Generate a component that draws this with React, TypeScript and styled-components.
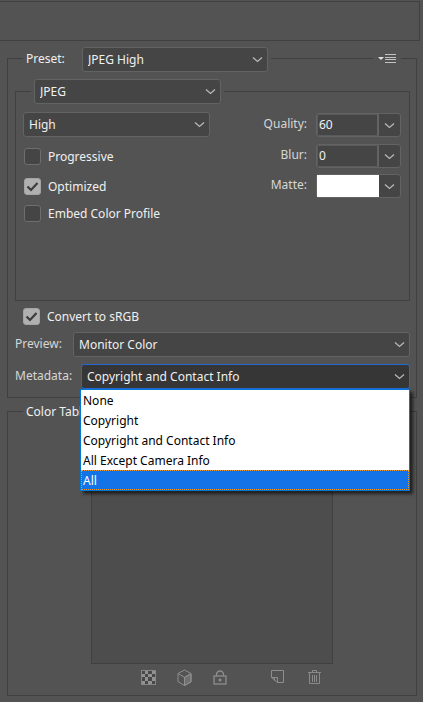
import React, { useState } from "react";
import styled, { createGlobalStyle, css } from "styled-components";

const color = {
  page: "#535353",
  line: "#404040",
  field: "#454545",
  fieldEdge: "#636363",
  text: "#f0f0f0",
  label: "#d6d6d6",
  icon: "#b8b8b8",
  dim: "#858585",
  accent: "#2467d1",
  listEdge: "#0078d7",
  listActive: "#1473e6",
};

const GlobalStyle = createGlobalStyle`
  *, *::before, *::after { box-sizing: border-box; }
  body {
    margin: 0;
    background: ${color.page};
    color: ${color.text};
    font: 12px/16px "Noto Sans", sans-serif;
  }
  button, input, select { font: inherit; color: inherit; margin: 0; }
`;

const Page = styled.main`
  padding: 1px 0 6px;
`;

const PreviewFrame = styled.div`
  height: 40px;
  margin-right: 3px;
  border: 1px solid ${color.line};
  border-left: 0;
`;

const Panel = styled.section<{ $space: number }>`
  margin: ${(p) => p.$space}px 6px 0 7px;
  border: 1px solid ${color.line};
`;

const SettingsPanel = styled(Panel)`
  padding: 0 6px 8px 7px;
`;

const FormatBox = styled.div`
  margin-top: 19px;
  border: 1px solid ${color.line};
`;

const PanelHeader = styled.div`
  display: flex;
  align-items: center;
  justify-content: space-between;
  height: 25px;
  margin: -12px 8px 0;
`;

const FormatHeader = styled(PanelHeader)`
  margin: -13px 15px 0;
`;

const Legend = styled.div`
  display: flex;
  align-items: center;
  padding: 0 3px;
  background: ${color.page};
`;

const LegendLabel = styled.label`
  width: 56px;
  height: 18px;
`;

const MenuButton = styled.button`
  display: flex;
  padding: 3px 5px 5px;
  margin-right: 1px;
  border: 0;
  background: ${color.page};
`;

const fieldShape = css`
  height: 25px;
  border: 1px solid ${color.fieldEdge};
  border-radius: 3px;
  background: ${color.field};
`;

const SelectWrap = styled.div<{ $width?: number }>`
  display: grid;
  align-items: center;
  ${(p) => (p.$width ? `width: ${p.$width}px;` : "flex: 1;")}
  > * { grid-area: 1 / 1; }
  > svg { justify-self: end; margin-right: 5px; pointer-events: none; }
`;

const NativeSelect = styled.select`
  ${fieldShape}
  width: 100%;
  padding: 0 24px 0 5px;
  appearance: none;
  color: ${color.text};
`;

const FormatBody = styled.div`
  display: flex;
  justify-content: space-between;
  padding: 8px 8px 78px 7px;
`;

const Options = styled.div`
  display: flex;
  flex-direction: column;
`;

const CheckLabel = styled.label<{ $top: number; $left: number }>`
  display: flex;
  align-items: center;
  gap: 7px;
  height: 17px;
  margin: ${(p) => p.$top}px 0 0 ${(p) => p.$left}px;
`;

const CheckMark = styled.span`
  display: grid;
  width: 17px;
  height: 17px;
  > * { grid-area: 1 / 1; }
  > svg { pointer-events: none; visibility: hidden; }
  > input:checked + svg { visibility: visible; }
`;

const CheckInput = styled.input`
  width: 17px;
  height: 17px;
  appearance: none;
  border: 1px solid #6e6e6e;
  border-radius: 3px;
  background: ${color.field};
  &:checked { background: #b0b0b0; border-color: #a4a4a4; }
`;

const Numbers = styled.div`
  display: grid;
  grid-template-columns: auto 85px;
  grid-template-rows: 31px 30px 24px;
  column-gap: 9px;
  padding-top: 1px;
`;

const NumberLabel = styled.label`
  height: 22px;
  line-height: 22px;
  text-align: right;
  color: ${color.label};
`;

const Combo = styled.div`
  ${fieldShape}
  display: flex;
  height: 24px;
`;

const ComboInput = styled.input`
  flex: 1;
  min-width: 0;
  padding: 0 1px;
  border: 1px solid #5a5a5a;
  border-right: 2px solid ${color.fieldEdge};
  background: transparent;
`;

const Swatch = styled.button`
  flex: 1;
  padding: 0;
  border: 0;
  background: #fff;
`;

const ComboArrow = styled.button`
  display: grid;
  place-items: center;
  width: 21px;
  padding: 0;
  border: 0;
  background: transparent;
`;

const FieldRow = styled.div`
  display: flex;
  align-items: center;
  margin-top: 7px;
`;

const FieldLabel = styled.label<{ $width: number }>`
  width: ${(p) => p.$width}px;
  height: 18px;
  color: ${color.label};
`;

const Dropdown = styled.div`
  position: relative;
  flex: 1;
`;

const DropdownButton = styled.button`
  ${fieldShape}
  display: flex;
  align-items: center;
  justify-content: space-between;
  width: 100%;
  padding: 0 4px 0 5px;
  border-color: ${color.accent};
  background: #363636;
`;

const OptionList = styled.ul`
  position: absolute;
  z-index: 1;
  top: 100%;
  left: -1px;
  right: 0;
  margin: 0;
  padding: 0;
  border: 1px solid ${color.listEdge};
  background: #fff;
  color: #000;
  list-style: none;
  box-shadow: 3px 3px 3px rgba(0, 0, 0, 0.6);
`;

const Option = styled.li<{ $active: boolean }>`
  height: 20px;
  padding: 0 2px;
  line-height: 22px;
  ${(p) =>
    p.$active &&
    css`
      background: ${color.listActive};
      color: #fff;
      outline: 1px dotted #e89a35;
      outline-offset: -1px;
    `}
`;

const TableHeader = styled.div`
  display: flex;
  height: 16px;
  margin: -8px 8px 0 15px;
`;

const Swatches = styled.div`
  width: 242px;
  height: 242px;
  margin: 2px auto 0;
  border: 1px solid ${color.line};
  background: #4d4d4d;
`;

const ToolRow = styled.div`
  display: flex;
  justify-content: center;
  gap: 16px;
  height: 31px;
  padding: 3px 0 8px 38px;
`;

const ToolButton = styled.button<{ $apart?: boolean }>`
  display: grid;
  place-items: center;
  width: 20px;
  padding: 0;
  margin-left: ${(p) => (p.$apart ? 22 : 0)}px;
  border: 0;
  background: transparent;
`;

const Chevron = () => (
  <svg width="11" height="7" viewBox="0 0 11 7" fill="none" stroke={color.icon} strokeWidth="1.3" aria-hidden="true">
    <path d="M1 1.5 5.5 5.5 10 1.5" />
  </svg>
);

type SelectProps = { id?: string; name: string; width?: number; options: string[] };

const Select = ({ id, name, width, options }: SelectProps) => (
  <SelectWrap $width={width}>
    <NativeSelect id={id} aria-label={id ? undefined : name}>
      {options.map((o) => (
        <option key={o}>{o}</option>
      ))}
    </NativeSelect>
    <Chevron />
  </SelectWrap>
);

type CheckProps = { label: string; checked?: boolean; top: number; left: number };

const Check = ({ label, checked, top, left }: CheckProps) => (
  <CheckLabel $top={top} $left={left}>
    <CheckMark>
      <CheckInput type="checkbox" defaultChecked={checked} />
      <svg width="17" height="17" viewBox="0 0 17 17" fill="none" stroke="#3c3c3c" strokeWidth="2.2" aria-hidden="true">
        <path d="M3.5 8.500 7 12 13.500 5" />
      </svg>
    </CheckMark>
    {label}
  </CheckLabel>
);

const NumberField = ({ id, label, value }: { id: string; label: string; value: string }) => (
  <>
    <NumberLabel htmlFor={id}>{label}:</NumberLabel>
    <Combo>
      <ComboInput id={id} defaultValue={value} />
      <ComboArrow aria-label={`${label} slider`}>
        <Chevron />
      </ComboArrow>
    </Combo>
  </>
);

const GridIcon = () => (
  <svg width="15" height="15" viewBox="0 0 15 15" aria-hidden="true">
    <rect x=".5" y=".5" width="14" height="14" fill="#484848" stroke={color.dim} />
    <path fill="#929292" d="M4 1h3v3H4zM11 1h3v3h-3zM1 4h3v3H1zM7 4h4v3H7zM4 7h3v4H4zM11 7h3v4h-3zM1 11h3v3H1zM7 11h4v3H7z" />
  </svg>
);

const CubeIcon = () => (
  <svg width="15" height="17" viewBox="0 0 15 17" fill="none" stroke="#8e8e8e" aria-hidden="true">
    <path fill="#707070" d="M7.5 8.5 14 5v8l-6.5 3.5z" />
    <path d="M7.5 1 14 4.5v8.2l-6.5 3.8L1 12.7V4.5zM1 4.5l6.5 3.8L14 4.5M7.5 8.3v8" />
  </svg>
);

const LockIcon = () => (
  <svg width="14" height="15" viewBox="0 0 14 15" fill="none" stroke="#8e8e8e" aria-hidden="true">
    <path d="M3.5 6V4.5a3.5 3.5 0 0 1 7 0V6" strokeWidth="1.3" />
    <rect x="1" y="6" width="12" height="8" strokeWidth="1.3" />
    <circle cx="7" cy="10" r="1.5" fill="#8e8e8e" stroke="none" />
  </svg>
);

const NewIcon = () => (
  <svg width="14" height="14" viewBox="0 0 14 14" fill="none" stroke="#8e8e8e" aria-hidden="true">
    <path d="M.5 7.500V.5h12v12h-6zM.5 7.500h6v5M3.500 7.500v3" />
  </svg>
);

const TrashIcon = () => (
  <svg width="13" height="16" viewBox="0 0 13 16" fill="none" stroke="#8a8a8a" aria-hidden="true">
    <path d="M0 3.500h13M4.500 3V1.500h4V3M1.500 4v10.500h10V4" />
    <path d="M4.500 6v7M6.500 6v7M8.500 6v7" />
  </svg>
);

const metadataOptions = ["None", "Copyright", "Copyright and Contact Info", "All Except Camera Info", "All"];

export default function App() {
  const [open, setOpen] = useState(true);
  const [metadata, setMetadata] = useState("Copyright and Contact Info");
  const [active, setActive] = useState("All");

  return (
    <>
      <GlobalStyle />
      <Page>
        <PreviewFrame />
        <SettingsPanel $space={17}>
          <PanelHeader>
            <Legend>
              <LegendLabel htmlFor="preset">Preset:</LegendLabel>
              <Select id="preset" name="Preset" width={186} options={["JPEG High", "JPEG Medium", "JPEG Low"]} />
            </Legend>
            <MenuButton aria-label="Preset menu">
              <svg width="18" height="10" viewBox="0 0 18 10" aria-hidden="true">
                <path d="M0 3h6L3 6z" fill="#e0e0e0" />
                <path d="M7 .5h11M7 3.500h11M7 5.500h11M7 8.500h11" stroke="#c4c4c4" />
              </svg>
            </MenuButton>
          </PanelHeader>

          <FormatBox>
            <FormatHeader>
              <Legend>
                <Select name="Format" width={187} options={["JPEG", "GIF", "PNG-8", "PNG-24"]} />
              </Legend>
            </FormatHeader>
            <FormatBody>
              <Options>
                <Select name="Compression quality" width={187} options={["High", "Medium", "Low"]} />
                <Check label="Progressive" top={11} left={1} />
                <Check label="Optimized" checked top={13} left={1} />
                <Check label="Embed Color Profile" top={10} left={1} />
              </Options>
              <Numbers>
                <NumberField id="quality" label="Quality" value="60" />
                <NumberField id="blur" label="Blur" value="0" />
                <NumberLabel htmlFor="matte">Matte:</NumberLabel>
                <Combo>
                  <Swatch id="matte" />
                  <ComboArrow aria-label="Matte options">
                    <Chevron />
                  </ComboArrow>
                </Combo>
              </Numbers>
            </FormatBody>
          </FormatBox>

          <Check label="Convert to sRGB" checked top={7} left={8} />

          <FieldRow>
            <FieldLabel $width={58} htmlFor="preview">Preview:</FieldLabel>
            <Select id="preview" name="Preview" options={["Monitor Color", "Use Document Profile"]} />
          </FieldRow>
          <FieldRow>
            <FieldLabel $width={66} htmlFor="metadata">Metadata:</FieldLabel>
            <Dropdown>
              <DropdownButton
                id="metadata"
                aria-haspopup="listbox"
                aria-expanded={open}
                onClick={() => setOpen(!open)}
              >
                {metadata}
                <Chevron />
              </DropdownButton>
              {open && (
                <OptionList role="listbox" aria-label="Metadata">
                  {metadataOptions.map((o) => (
                    <Option
                      key={o}
                      role="option"
                      aria-selected={o === metadata}
                      $active={o === active}
                      onMouseEnter={() => setActive(o)}
                      onClick={() => {
                        setMetadata(o);
                        setOpen(false);
                      }}
                    >
                      {o}
                    </Option>
                  ))}
                </OptionList>
              )}
            </Dropdown>
          </FieldRow>
        </SettingsPanel>

        <Panel $space={13}>
          <TableHeader>
            <Legend>Color Table</Legend>
          </TableHeader>
          <Swatches />
          <ToolRow>
            <ToolButton aria-label="Map to transparent"><GridIcon /></ToolButton>
            <ToolButton aria-label="Shift to web palette"><CubeIcon /></ToolButton>
            <ToolButton aria-label="Lock color"><LockIcon /></ToolButton>
            <ToolButton aria-label="New color" $apart><NewIcon /></ToolButton>
            <ToolButton aria-label="Delete color"><TrashIcon /></ToolButton>
          </ToolRow>
        </Panel>
      </Page>
    </>
  );
}
